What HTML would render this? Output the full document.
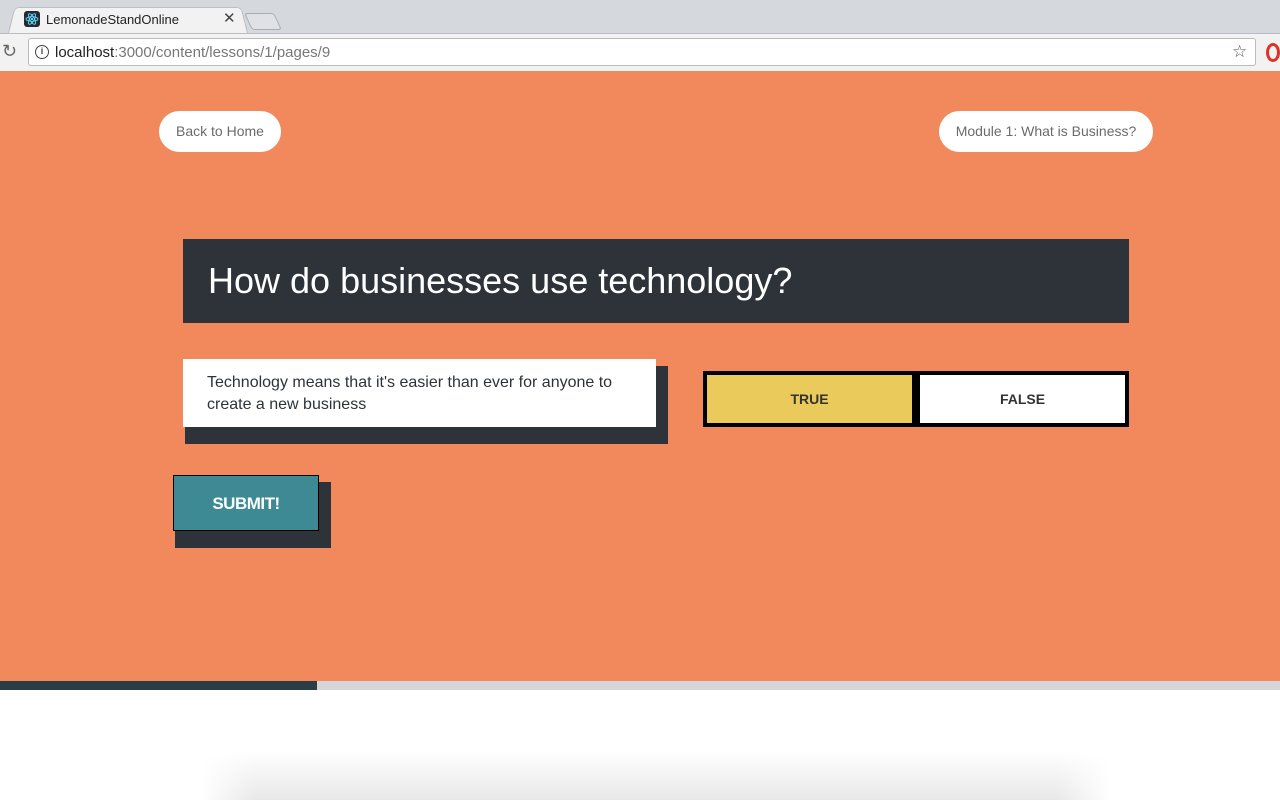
<!DOCTYPE html>
<html><head><meta charset="utf-8"><style>
*{margin:0;padding:0;box-sizing:border-box}
html,body{width:1280px;height:800px;overflow:hidden}
body{font-family:"Liberation Sans",Arial,sans-serif;background:#fff}
#w{position:relative;width:1280px;height:800px;overflow:hidden}
.a{position:absolute}
</style></head><body><div id="w">
<div class="a" style="left:0;top:0;width:1280px;height:33px;background:#d5d8dc"></div>
<div class="a" style="left:8px;top:5px;width:240px;height:28px;background:#f2f2f2;border:1px solid #b9bcc0;border-bottom:none;border-radius:5px 5px 0 0;transform:perspective(100px) rotateX(12deg);transform-origin:bottom"></div>
<div class="a" style="left:248px;top:13px;width:30px;height:17px;background:#dfe1e4;border:1px solid #a9acb0;border-radius:3px;transform:skewX(25deg)"></div>
<div class="a" style="left:24px;top:11px;width:16px;height:16px;background:#232a33;border-radius:3px"><svg width="16" height="16" viewBox="0 0 16 16"><g fill="none" stroke="#61dafb" stroke-width="0.9"><ellipse cx="8" cy="8" rx="6" ry="2.3"/><ellipse cx="8" cy="8" rx="6" ry="2.3" transform="rotate(60 8 8)"/><ellipse cx="8" cy="8" rx="6" ry="2.3" transform="rotate(120 8 8)"/></g><circle cx="8" cy="8" r="1.2" fill="#61dafb"/></svg></div>
<div class="a" style="left:46px;top:12px;font-size:13px;color:#222">LemonadeStandOnline</div>
<div class="a" style="left:223px;top:9px;font-size:15px;color:#444">✕</div>
<div class="a" style="left:0;top:33px;width:1280px;height:38px;background:#f2f2f2;border-top:1px solid #b9bcc0"></div>
<div class="a" style="left:2px;top:41px;font-size:18px;color:#666">↻</div>
<div class="a" style="left:28px;top:38px;width:1228px;height:28px;background:#fff;border:1px solid #bbb;border-radius:3px"></div>
<div class="a" style="left:35px;top:45px;width:14px;height:14px;border:1.5px solid #444;border-radius:50%;font-size:9px;text-align:center;line-height:11px;color:#444;font-weight:bold">i</div>
<div class="a" style="left:55px;top:44px;font-size:15px;color:#222">localhost<span style="color:#777">:3000/content/lessons/1/pages/9</span></div>
<div class="a" style="left:1232px;top:42px;font-size:17px;color:#555">☆</div>
<div class="a" style="left:1266px;top:43px;width:14px;height:19px;border-radius:50%;border:3px solid #e03224"></div>
<div class="a" style="left:0;top:71px;width:1280px;height:610px;background:#f2895d"></div>
<div class="a" style="left:159px;top:111px;width:122px;height:41px;background:#fff;border-radius:21px;font-size:14px;color:#6b6b6b;text-align:center;line-height:41px">Back to Home</div>
<div class="a" style="left:939px;top:111px;width:214px;height:41px;background:#fff;border-radius:21px;font-size:14px;color:#6b6b6b;text-align:center;line-height:41px">Module 1: What is Business?</div>
<div class="a" style="left:183px;top:239px;width:946px;height:84px;background:#2e333a;color:#fff;font-size:36px;padding-left:25px;line-height:84px">How do businesses use technology?</div>
<div class="a" style="left:185px;top:366px;width:483px;height:78px;background:#2e333a"></div>
<div class="a" style="left:183px;top:359px;width:473px;height:68px;background:#fff;color:#2e333a;font-size:16px;line-height:22px;padding:13px 24px">Technology means that it's easier than ever for anyone to create a new business</div>
<div class="a" style="left:703px;top:371px;width:426px;height:56px;background:#000"></div>
<div class="a" style="left:707px;top:375px;width:205px;height:48px;background:#e9ca5a;font-size:14px;font-weight:bold;color:#333;text-align:center;line-height:48px">TRUE</div>
<div class="a" style="left:920px;top:375px;width:205px;height:48px;background:#fff;font-size:14px;font-weight:bold;color:#333;text-align:center;line-height:48px">FALSE</div>
<div class="a" style="left:175px;top:482px;width:156px;height:66px;background:#2e333a"></div>
<div class="a" style="left:173px;top:475px;width:146px;height:56px;background:#3d8a94;border:1px solid #000;color:#fff;font-size:17px;font-weight:bold;text-align:center;line-height:56px;letter-spacing:-0.5px">SUBMIT!</div>
<div class="a" style="left:0;top:681px;width:1280px;height:9px;background:#d6d6d8"></div>
<div class="a" style="left:0;top:681px;width:317px;height:9px;background:#2c3e45"></div>
<div class="a" style="left:200px;top:750px;width:912px;height:50px;background:linear-gradient(to bottom,rgba(0,0,0,0),rgba(0,0,0,0.09));-webkit-mask:linear-gradient(to right,transparent,#000 6%,#000 94%,transparent);mask:linear-gradient(to right,transparent,#000 6%,#000 94%,transparent)"></div>
</div></body></html>
